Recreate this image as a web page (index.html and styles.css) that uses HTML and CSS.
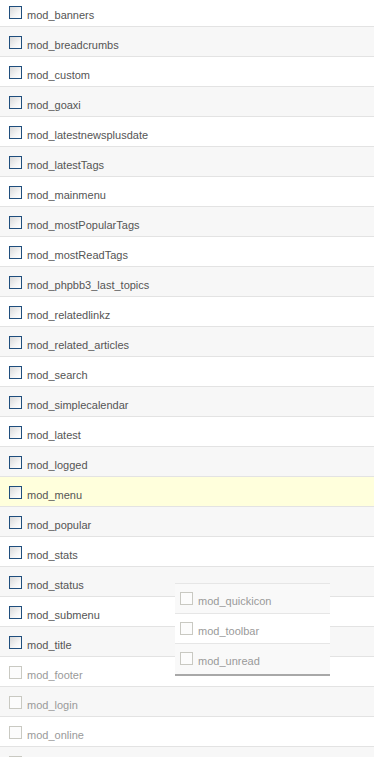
FILE: index.html
```html
<!DOCTYPE html>
<html>
<head>
<meta charset="utf-8">
<link rel="stylesheet" href="styles.css">
</head>
<body>
<div class="page">
  <ul class="list">
    <li class="row"><span class="cb"></span><span class="lbl">mod_banners</span></li>
    <li class="row"><span class="cb"></span><span class="lbl">mod_breadcrumbs</span></li>
    <li class="row"><span class="cb"></span><span class="lbl">mod_custom</span></li>
    <li class="row"><span class="cb"></span><span class="lbl">mod_goaxi</span></li>
    <li class="row"><span class="cb"></span><span class="lbl">mod_latestnewsplusdate</span></li>
    <li class="row"><span class="cb"></span><span class="lbl">mod_latestTags</span></li>
    <li class="row"><span class="cb"></span><span class="lbl">mod_mainmenu</span></li>
    <li class="row"><span class="cb"></span><span class="lbl">mod_mostPopularTags</span></li>
    <li class="row"><span class="cb"></span><span class="lbl">mod_mostReadTags</span></li>
    <li class="row"><span class="cb"></span><span class="lbl">mod_phpbb3_last_topics</span></li>
    <li class="row"><span class="cb"></span><span class="lbl">mod_relatedlinkz</span></li>
    <li class="row"><span class="cb"></span><span class="lbl">mod_related_articles</span></li>
    <li class="row"><span class="cb"></span><span class="lbl">mod_search</span></li>
    <li class="row"><span class="cb"></span><span class="lbl">mod_simplecalendar</span></li>
    <li class="row"><span class="cb"></span><span class="lbl">mod_latest</span></li>
    <li class="row"><span class="cb"></span><span class="lbl">mod_logged</span></li>
    <li class="row hover"><span class="cb"></span><span class="lbl">mod_menu</span></li>
    <li class="row"><span class="cb"></span><span class="lbl">mod_popular</span></li>
    <li class="row"><span class="cb"></span><span class="lbl">mod_stats</span></li>
    <li class="row"><span class="cb"></span><span class="lbl">mod_status</span></li>
    <li class="row"><span class="cb"></span><span class="lbl">mod_submenu</span></li>
    <li class="row"><span class="cb"></span><span class="lbl">mod_title</span></li>
    <li class="row off"><span class="cb"></span><span class="lbl">mod_footer</span></li>
    <li class="row off"><span class="cb"></span><span class="lbl">mod_login</span></li>
    <li class="row off"><span class="cb"></span><span class="lbl">mod_online</span></li>
    <li class="row off"><span class="cb"></span></li>
  </ul>
  <ul class="popup">
    <li class="prow off"><span class="cb"></span><span class="lbl">mod_quickicon</span></li>
    <li class="prow off"><span class="cb"></span><span class="lbl">mod_toolbar</span></li>
    <li class="prow off"><span class="cb"></span><span class="lbl">mod_unread</span></li>
  </ul>
</div>
</body>
</html>
```
FILE: styles.css
```css
html, body {
  margin: 0;
  padding: 0;
  background: #fff;
  overflow: hidden;
}
.page {
  position: relative;
  width: 374px;
  height: 757px;
  overflow: hidden;
  font-family: "Liberation Sans", Arial, sans-serif;
  font-size: 11px;
}
.list, .popup {
  list-style: none;
  margin: 0;
  padding: 0;
}
.list {
  margin-top: -3px;
}
.row {
  display: flex;
  align-items: flex-start;
  height: 29px;
  border-bottom: 1px solid #e3e3e3;
  background: #fff;
  box-sizing: content-box;
}
.row:nth-child(even) {
  background: #f7f7f7;
}
.row.hover {
  background: #ffffdc;
}
.cb {
  flex: none;
  width: 11px;
  height: 11px;
  border: 1px solid #1f4e7d;
  background: linear-gradient(135deg, #d8d8d8 0%, #f4f4f4 60%, #fff 100%);
  margin: 9px 0 0 9px;
}
.lbl {
  color: #555;
  line-height: 13px;
  margin: 12px 0 0 5px;
}
.off .cb {
  border-color: #c9c9c2;
  background: #fcfcfc;
}
.off .lbl {
  color: #9a9a9a;
}
.popup {
  position: absolute;
  left: 175px;
  top: 583px;
  width: 155px;
  border-top: 1px solid #e6e6e6;
  border-bottom: 2px solid #a8a8a8;
  background: #fff;
}
.prow {
  display: flex;
  align-items: flex-start;
  height: 29px;
  border-bottom: 1px solid #e6e6e6;
  background: #f9f9f9;
}
.prow:nth-child(even) {
  background: #fff;
}
.prow:last-child {
  border-bottom: none;
  height: 30px;
}
.prow .cb {
  margin: 8px 0 0 5px;
}
.prow .lbl {
  margin-left: 5px;
  margin-top: 11px;
}
```
